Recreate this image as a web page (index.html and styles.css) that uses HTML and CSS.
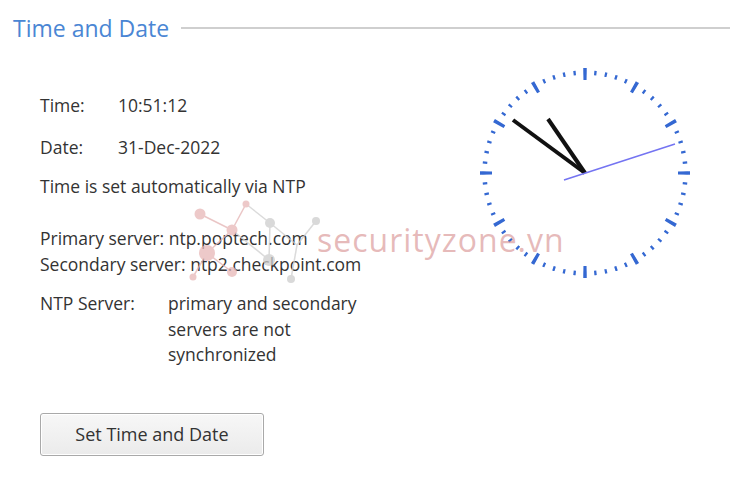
FILE: index.html
```html
<!DOCTYPE html>
<html>
<head>
<meta charset="utf-8">
<link rel="stylesheet" href="styles.css">
</head>
<body>
<div class="panel">
  <div class="header">
    <span class="title">Time and Date</span>
    <span class="rule"></span>
  </div>
  <div class="content">
    <div class="info">
      <div class="row r-time"><span class="label">Time:</span><span class="value">10:51:12</span></div>
      <div class="row r-date"><span class="label">Date:</span><span class="value">31-Dec-2022</span></div>
      <div class="auto">Time is set automatically via NTP</div>
      <div class="servers">
        <div>Primary server: ntp.poptech.com</div>
        <div>Secondary server: ntp2.checkpoint.com</div>
      </div>
      <div class="ntp">
        <span class="ntp-label">NTP Server:</span>
        <span class="ntp-value">primary and secondary<br>servers are not<br>synchronized</span>
      </div>
      <button class="btn" type="button">Set Time and Date</button>
    </div>
    <svg class="clock" width="230" height="230" viewBox="-115 -115 230 230">
      <circle class="minor" r="100.5" pathLength="60"/>
      <circle class="major" r="99" pathLength="12"/>
      <line class="hand" x1="0" y1="0" x2="-72" y2="-53"/>
      <line class="hand" x1="0" y1="0" x2="-37" y2="-54"/>
      <line class="sec" x1="-21" y1="7" x2="90" y2="-29"/>
    </svg>
  </div>
  <div class="watermark">
    <svg class="mol" width="150" height="90" viewBox="0 0 150 90">
      <g class="pink-l">
        <line x1="20" y1="19" x2="52" y2="35"/>
        <line x1="52" y1="35" x2="66" y2="9"/>
        <line x1="52" y1="35" x2="27" y2="58"/>
        <line x1="27" y1="58" x2="52" y2="77"/>
        <line x1="27" y1="58" x2="13" y2="82"/>
      </g>
      <g class="gray-l">
        <line x1="66" y1="9" x2="90" y2="28"/>
        <line x1="90" y1="28" x2="89" y2="65"/>
        <line x1="90" y1="28" x2="117" y2="50"/>
        <line x1="136" y1="26" x2="117" y2="50"/>
        <line x1="117" y1="50" x2="111" y2="84"/>
        <line x1="52" y1="35" x2="89" y2="65"/>
      </g>
      <g class="pink-c">
        <circle cx="20" cy="19" r="5.5"/>
        <circle cx="66" cy="9" r="3.5"/>
        <circle cx="52" cy="35" r="5.5"/>
        <circle cx="27" cy="58" r="8"/>
        <circle cx="52" cy="77" r="5"/>
        <circle cx="13" cy="82" r="3.5"/>
      </g>
      <g class="gray-c">
        <circle cx="90" cy="28" r="5"/>
        <circle cx="136" cy="26" r="4"/>
        <circle cx="89" cy="65" r="6"/>
        <circle cx="111" cy="84" r="4"/>
      </g>
    </svg>
    <span class="wm-text">securityzone.vn</span>
  </div>
</div>
</body>
</html>
```
FILE: styles.css
```css
html, body {
  margin: 0;
  padding: 0;
  background: #ffffff;
}
.panel {
  position: relative;
  width: 730px;
  height: 483px;
  overflow: hidden;
  font-family: "Open Sans", "Noto Sans", sans-serif;
  color: #333333;
}
.header {
  display: flex;
  align-items: center;
  padding: 12px 0 0 13px;
  height: 32px;
}
.title {
  font-size: 23px;
  color: #4a86d4;
  line-height: 32px;
}
.rule {
  flex: 1;
  height: 2px;
  background: #cfcfcf;
  margin-left: 12px;
}
.content {
  display: flex;
}
.info {
  width: 430px;
  padding: 51px 0 0 40px;
  font-size: 17.5px;
  line-height: 20px;
}
.row {
  display: flex;
}
.label {
  width: 78px;
}
.r-time { margin-bottom: 22px; }
.r-date { margin-bottom: 19px; }
.auto { margin-bottom: 29px; }
.servers { line-height: 26px; }
.ntp {
  display: flex;
  margin-top: 14px;
  line-height: 25.5px;
}
.ntp-label { width: 128px; }
.btn {
  display: block;
  margin-top: 45px;
  width: 224px;
  height: 43px;
  font-family: inherit;
  font-size: 18px;
  color: #333333;
  background: linear-gradient(#f7f7f7, #ebebeb);
  border: 1px solid #a9a9a9;
  border-radius: 3px;
  box-shadow: inset 0 0 0 1px #ffffff;
  padding: 0;
}
.clock {
  margin: 14px 0 0 0;
}
.minor {
  fill: none;
  stroke: #3468d2;
  stroke-width: 4.5;
  stroke-dasharray: 0.22 0.78;
  stroke-dashoffset: 0.11;
}
.major {
  fill: none;
  stroke: #3468d2;
  stroke-width: 12;
  stroke-dasharray: 0.066 0.934;
  stroke-dashoffset: 0.033;
}
.hand {
  stroke: #111111;
  stroke-width: 4;
}
.sec {
  stroke: #7474f2;
  stroke-width: 1.5;
}
.watermark {
  position: absolute;
  left: 180px;
  top: 195px;
  width: 400px;
  height: 90px;
  pointer-events: none;
}
.mol {
  position: absolute;
  left: 0;
  top: 0;
  opacity: 0.75;
}
.pink-l line { stroke: #e4b3b3; stroke-width: 1.5; }
.gray-l line { stroke: #cfcfcf; stroke-width: 1.5; }
.pink-c circle { fill: #e8b8b8; }
.gray-c circle { fill: #cdcdcd; }
.wm-text {
  position: absolute;
  left: 137px;
  top: 25px;
  font-family: "Open Sans", sans-serif;
  font-size: 32px;
  line-height: 40px;
  letter-spacing: 1px;
  color: rgba(214, 140, 140, 0.6);
}
```
